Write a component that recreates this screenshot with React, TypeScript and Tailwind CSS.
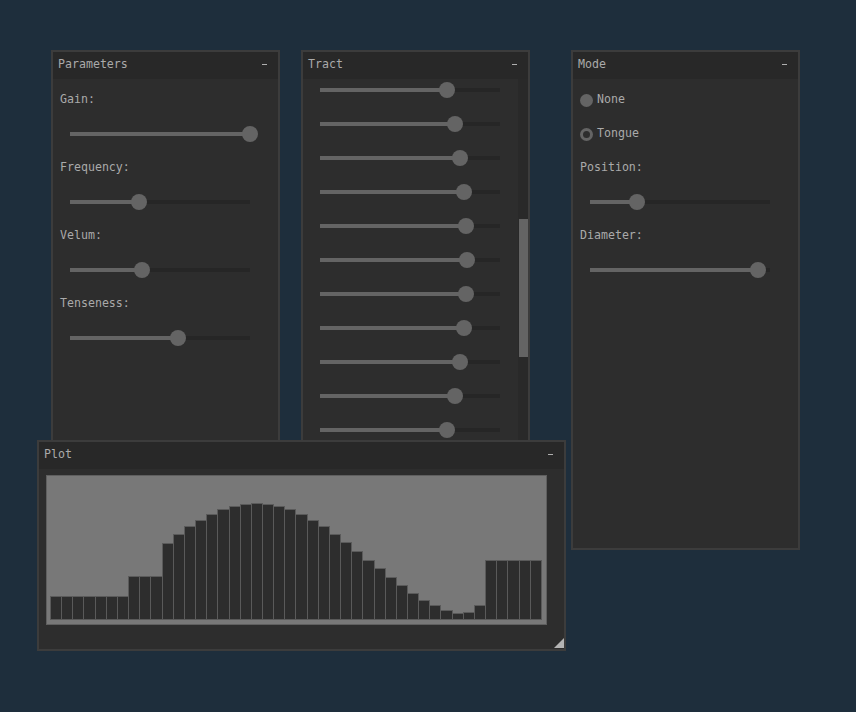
import type { ReactNode } from 'react';

const tractValues = [
  0.706, 0.75, 0.778, 0.8, 0.811, 0.817, 0.811, 0.8, 0.778, 0.75, 0.706, 0.66, 0.6,
];

const plotHeights = [
  24, 24, 24, 24, 24, 24, 24, 44, 44, 44, 77, 86, 94, 100, 106, 111, 114, 116, 117, 116,
  114, 111, 106, 100, 94, 86, 78, 69, 60, 52, 43, 35, 27, 20, 15, 10, 7, 8, 15, 60, 60,
  60, 60, 60,
];

function Panel(props: { title: string; className: string; children?: ReactNode }) {
  return (
    <div
      className={`absolute flex flex-col border-2 border-[#3c3c3c] bg-[#2d2d2d] ${props.className}`}
    >
      <div className="flex h-[27px] shrink-0 items-center justify-between bg-[#282828] pl-[5px] pr-[11px]">
        <span className="-mt-[2px]">{props.title}</span>
        <span className="-mt-[2px] h-px w-[5px] bg-[#afafaf]" />
      </div>
      {props.children}
    </div>
  );
}

function Slider(props: { value: number; offset: string }) {
  const x = props.value * 180;
  return (
    <div className={`relative flex h-[34px] items-center ${props.offset}`}>
      <div className="relative h-[4px] w-[180px] bg-[#262626]">
        <div className="absolute left-0 top-0 h-full bg-[#646464]" style={{ width: x }} />
        <div
          className="absolute top-1/2 h-[16px] w-[16px] -translate-x-1/2 -translate-y-1/2 rounded-full bg-[#646464]"
          style={{ left: x }}
        />
      </div>
    </div>
  );
}

function Label(props: { text: string }) {
  return <div className="flex h-[34px] items-center">{props.text}</div>;
}

function Radio(props: { label: string; active?: boolean }) {
  return (
    <div className="flex h-[34px] items-center gap-[4px]">
      <div className="flex h-[13px] w-[13px] items-center justify-center rounded-full bg-[#646464]">
        {props.active && <div className="h-[7px] w-[7px] rounded-full bg-[#2d2d2d]" />}
      </div>
      <span>{props.label}</span>
    </div>
  );
}

export default function App() {
  return (
    <div className="relative h-[712px] w-[856px] overflow-hidden bg-[#1e2e3c] font-['DejaVu_Sans_Mono',monospace] text-[11.6px] text-[#aaaaaa]">
      <Panel title="Parameters" className="left-[51px] top-[50px] h-[450px] w-[229px]">
        <div className="flex flex-col pl-[7px] pt-[4px]">
          <Label text="Gain:" />
          <Slider value={1} offset="ml-[10px]" />
          <Label text="Frequency:" />
          <Slider value={0.383} offset="ml-[10px]" />
          <Label text="Velum:" />
          <Slider value={0.4} offset="ml-[10px]" />
          <Label text="Tenseness:" />
          <Slider value={0.6} offset="ml-[10px]" />
        </div>
      </Panel>

      <Panel title="Tract" className="left-[301px] top-[50px] h-[450px] w-[229px]">
        <div className="relative flex-1 overflow-hidden">
          <div className="-mt-[6px] flex flex-col">
            {tractValues.map((v, i) => (
              <Slider key={i} value={v} offset="ml-[17px]" />
            ))}
          </div>
          <div className="absolute bottom-0 right-0 top-0 w-[10px] bg-[#292929]">
            <div className="absolute left-px right-0 top-[140px] h-[138px] bg-[#646464]" />
          </div>
        </div>
      </Panel>

      <Panel title="Mode" className="left-[571px] top-[50px] h-[500px] w-[229px]">
        <div className="flex flex-col pl-[7px] pt-[4px]">
          <Radio label="None" />
          <Radio label="Tongue" active />
          <Label text="Position:" />
          <Slider value={0.261} offset="ml-[10px]" />
          <Label text="Diameter:" />
          <Slider value={0.933} offset="ml-[10px]" />
        </div>
      </Panel>

      <Panel title="Plot" className="left-[37px] top-[440px] h-[211px] w-[529px]">
        <div className="ml-[7px] mt-[6px] flex h-[150px] w-[501px] items-end border border-[#5f5f5f] bg-[#787878] pb-[4px] pl-[3px] pr-[4px]">
          {plotHeights.map((h, i) => (
            <div
              key={i}
              className="-ml-px flex-1 border border-[#5a5a5a] bg-[#2d2d2d] first:ml-0"
              style={{ height: h }}
            />
          ))}
        </div>
        <svg className="absolute bottom-px right-0" width="10" height="10" viewBox="0 0 10 10">
          <polygon points="10,0 10,10 0,10" fill="#b4b4b4" />
        </svg>
      </Panel>
    </div>
  );
}
